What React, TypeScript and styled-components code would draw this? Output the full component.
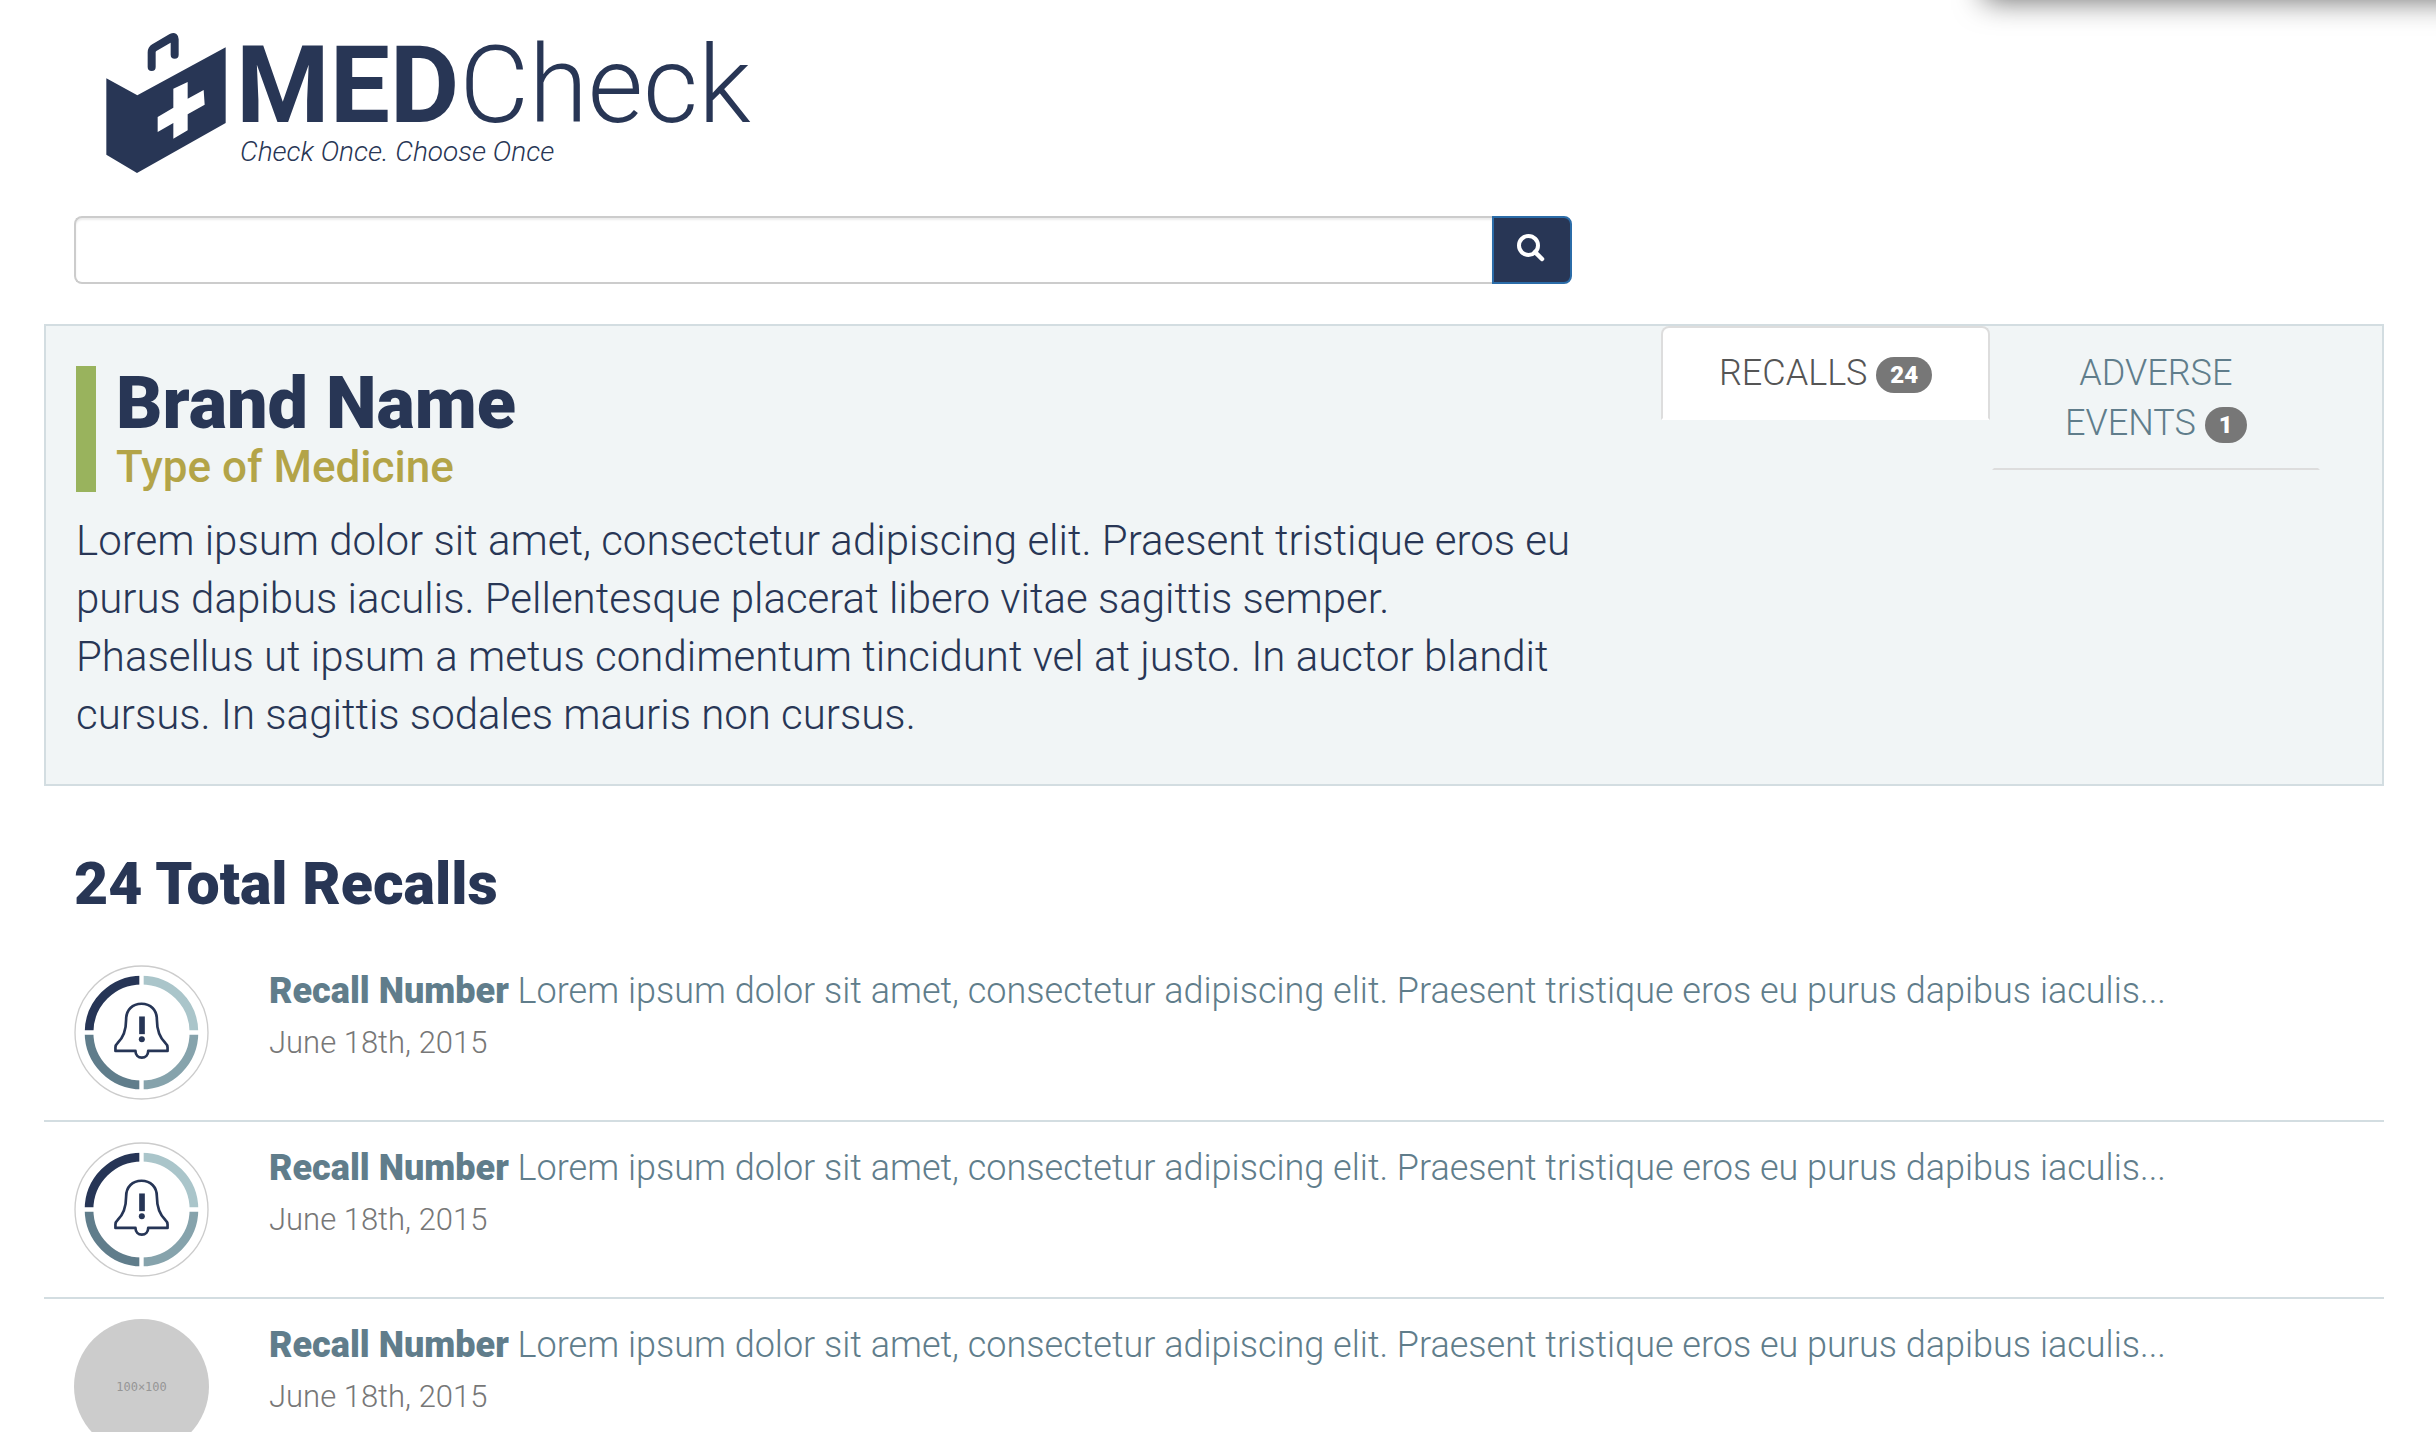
import React from "react";
import styled, { createGlobalStyle } from "styled-components";

const navy = "#283655";
const teal = "#607d8b";
const line = "#d3dde1";

const GlobalStyle = createGlobalStyle`
  *, *::before, *::after { box-sizing: border-box; }
  body {
    margin: 0;
    background: #fff;
    color: ${navy};
    font-family: Roboto, "Liberation Sans", sans-serif;
    font-weight: 300;
    -webkit-font-smoothing: antialiased;
  }
  a { text-decoration: none; }
`;

const Page = styled.div`
  position: relative;
  overflow: hidden;
  padding: 32px 52px 0 44px;
`;

const DrawerShadow = styled.div`
  position: absolute;
  top: -60px;
  right: -60px;
  width: 512px;
  height: 60px;
  box-shadow: 0 0 30px rgba(0, 0, 0, 0.6);
`;

const Brand = styled.a`
  display: flex;
  gap: 10px;
  width: fit-content;
  margin-left: 62px;
  color: ${navy};
`;

const BrandMark = styled.svg`
  width: 120px;
  height: 142px;
`;

const BrandText = styled.span`
  display: flex;
  flex-direction: column;
`;

const Wordmark = styled.span`
  font-size: 107px;
  line-height: 108px;
  font-weight: 300;

  b { font-weight: 700; }
`;

const Tagline = styled.span`
  padding-left: 4px;
  font-size: 28px;
  line-height: 24px;
  font-style: italic;
`;

const Grid = styled.div`
  display: grid;
  grid-template-columns: 2fr 1fr;
`;

const SearchForm = styled.form`
  display: flex;
  height: 68px;
  margin: 42px 32px 40px 30px;
`;

const SearchInput = styled.input`
  flex: 1;
  min-width: 0;
  padding: 12px 24px;
  border: 2px solid #ccc;
  border-right: 0;
  border-radius: 8px 0 0 8px;
  box-shadow: inset 0 2px 2px rgba(0, 0, 0, 0.08);
  font: 300 36px Roboto, sans-serif;
  color: ${navy};
  outline: 0;
`;

const SearchButton = styled.button`
  display: flex;
  align-items: center;
  justify-content: center;
  width: 80px;
  padding: 0 2px 4px 0;
  border: 2px solid #2b6ca8;
  border-radius: 0 8px 8px 0;
  background: ${navy};
  color: #fff;
`;

const Panel = styled(Grid).attrs({ as: "section" })`
  border: 2px solid ${line};
  background: #f1f5f6;
`;

const Summary = styled.div`
  padding: 40px 30px;
`;

const Title = styled.header`
  padding-left: 20px;
  border-left: 20px solid #99b35d;
`;

const Name = styled.h1`
  margin: 0;
  font-size: 72px;
  line-height: 76px;
  font-weight: 900;
`;

const Kind = styled.h2`
  margin: 0;
  color: #b3a448;
  font-size: 44px;
  line-height: 50px;
  font-weight: 500;
`;

const Description = styled.p`
  margin: 20px 0 0;
  font-size: 42px;
  line-height: 58px;
`;

const Tabs = styled.nav`
  display: grid;
  grid-template-columns: 1fr 1fr;
  column-gap: 2px;
  align-items: start;
  padding: 0 62px 0 58px;
`;

const Tab = styled.a<{ $active?: boolean }>`
  padding: 20px ${(p) => (p.$active ? 40 : 60)}px;
  border: 2px solid ${(p) => (p.$active ? "#ddd" : "transparent")};
  border-bottom-color: ${(p) => (p.$active ? "#fff" : "#ddd")};
  border-radius: 8px 8px 0 0;
  background: ${(p) => (p.$active ? "#fff" : "transparent")};
  color: ${(p) => (p.$active ? "#555" : teal)};
  font-size: 36px;
  line-height: 50px;
  text-align: center;
  text-transform: uppercase;
`;

const Badge = styled.span`
  display: inline-block;
  padding: 6px 14px;
  border-radius: 20px;
  background: #777;
  color: #fff;
  font-size: 24px;
  line-height: 24px;
  font-weight: 900;
  vertical-align: middle;
`;

const ListTitle = styled.h2`
  margin: 61px 30px 44px;
  font-size: 59px;
  line-height: 74px;
  font-weight: 900;
`;

const List = styled.ul`
  margin: 0;
  padding: 0;
  list-style: none;
`;

const Item = styled.li`
  display: grid;
  grid-template-columns: 1fr 11fr;
  padding: 20px 0;
  border-bottom: 2px solid ${line};

  &:first-child { padding-top: 0; }
`;

const Avatar = styled.div`
  padding: 0 30px;

  svg { display: block; width: 100%; height: auto; }
`;

const Placeholder = styled.div`
  display: grid;
  place-items: center;
  aspect-ratio: 1;
  border-radius: 50%;
  background: #ccc;
  color: #969696;
  font: 12px "DejaVu Sans Mono", monospace;
`;

const ItemText = styled.div`
  padding: 0 30px;
`;

const ItemLink = styled.a`
  display: block;
  color: ${teal};
  font-size: 36px;
  line-height: 52px;

  b { font-weight: 900; }
`;

const ItemDate = styled.time`
  display: block;
  color: #777;
  font-size: 31px;
  line-height: 52px;
`;

function KitLogo() {
  return (
    <BrandMark viewBox="33 23 360 426" aria-hidden="true">
      <path d="M34 162 127 213 392 69V296L126 446 34 391Z" fill={navy} />
      <path
        d="M170 128V84Q170 75 178 70L231 39Q239 35 239 45V91"
        fill="none"
        stroke={navy}
        strokeWidth="24"
        strokeLinecap="round"
      />
      <path
        d="M235 193 278 173V223L326 197 329 241 278 270V318L235 343V296L188 323V278L235 250Z"
        fill="#fff"
      />
    </BrandMark>
  );
}

function SearchIcon() {
  return (
    <svg width="30" height="30" viewBox="0 0 30 30" fill="none" stroke="#fff" aria-hidden="true">
      <circle cx="12.5" cy="12.5" r="9.5" strokeWidth="4" />
      <path d="M19 19 26 26" strokeWidth="4.5" strokeLinecap="round" />
    </svg>
  );
}

function BellIcon() {
  return (
    <svg viewBox="101 77 404 404" fill="none" aria-hidden="true">
      <circle cx="303" cy="279" r="199" stroke="#ccc" strokeWidth="4" />
      <g strokeWidth="26">
        <path d="M146 279A157 157 0 0 1 303 122" stroke="#263556" />
        <path d="M303 122A157 157 0 0 1 460 279" stroke="#aac5ca" />
        <path d="M460 279A157 157 0 0 1 303 436" stroke="#86a3ac" />
        <path d="M303 436A157 157 0 0 1 146 279" stroke="#607d8b" />
      </g>
      <path d="M303 100V458M125 279H481" stroke="#fff" strokeWidth="13" />
      <path
        d="M285 334H225V324Q225 316 231 311C250 293 257 272 257 240C257 211 276 193 303 193C330 193 349 211 349 240C349 272 356 293 375 311Q381 316 381 324V334H323C323 346 315 354 304 354C293 354 285 346 285 334Z"
        stroke="#263556"
        strokeWidth="8"
        strokeLinejoin="round"
      />
      <path d="M296 231H313V284H296Z" fill="#263556" />
      <circle cx="304" cy="299" r="9" fill="#263556" />
    </svg>
  );
}

const recalls = [
  { id: 1, hasIcon: true },
  { id: 2, hasIcon: true },
  { id: 3, hasIcon: false },
];

export default function App() {
  return (
    <Page>
      <GlobalStyle />
      <DrawerShadow />
      <Brand href="#">
        <KitLogo />
        <BrandText>
          <Wordmark>
            <b>MED</b>Check
          </Wordmark>
          <Tagline>Check Once. Choose Once</Tagline>
        </BrandText>
      </Brand>
      <Grid>
        <SearchForm role="search" onSubmit={(e) => e.preventDefault()}>
          <SearchInput type="text" aria-label="Search medicines" />
          <SearchButton type="submit" aria-label="Search">
            <SearchIcon />
          </SearchButton>
        </SearchForm>
      </Grid>
      <Panel>
        <Summary>
          <Title>
            <Name>Brand Name</Name>
            <Kind>Type of Medicine</Kind>
          </Title>
          <Description>
            Lorem ipsum dolor sit amet, consectetur adipiscing elit. Praesent tristique eros eu purus
            dapibus iaculis. Pellentesque placerat libero vitae sagittis semper. Phasellus ut ipsum a
            metus condimentum tincidunt vel at justo. In auctor blandit cursus. In sagittis sodales
            mauris non cursus.
          </Description>
        </Summary>
        <Tabs>
          <Tab href="#recalls" $active>
            Recalls <Badge>24</Badge>
          </Tab>
          <Tab href="#events">
            Adverse Events <Badge>1</Badge>
          </Tab>
        </Tabs>
      </Panel>
      <ListTitle>24 Total Recalls</ListTitle>
      <List>
        {recalls.map((r) => (
          <Item key={r.id}>
            <Avatar>{r.hasIcon ? <BellIcon /> : <Placeholder>100×100</Placeholder>}</Avatar>
            <ItemText>
              <ItemLink href="#">
                <b>Recall Number</b> Lorem ipsum dolor sit amet, consectetur adipiscing elit.
                Praesent tristique eros eu purus dapibus iaculis...
              </ItemLink>
              <ItemDate>June 18th, 2015</ItemDate>
            </ItemText>
          </Item>
        ))}
      </List>
    </Page>
  );
}
